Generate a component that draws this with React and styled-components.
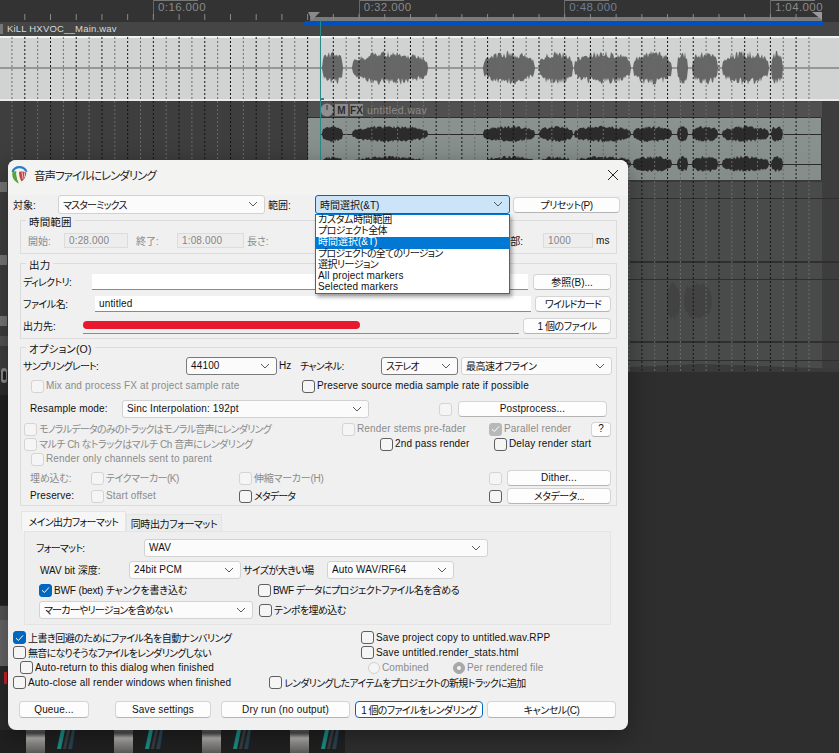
import React from "react";
import styled, { createGlobalStyle, css } from "styled-components";

const GlobalStyle = createGlobalStyle`
  * { box-sizing: border-box; }
  html, body { margin: 0; padding: 0; background: #2e2e2e; }
  body {
    font-family: "Liberation Sans", "Noto Sans CJK JP", sans-serif;
    font-size: 10px;
    font-feature-settings: "palt";
    letter-spacing: 0.15px;
  }
`;

// kana in the dialog font is narrower than in Noto, so close it up by how much kana a string has
const KANA = /[\u3040-\u30ff]/g;
function tracking(text) {
  if (typeof text !== "string" || !text.length) return 0.15;
  const kana = (text.match(KANA) || []).length;
  if (!kana) return /[\u4e00-\u9fff]/.test(text) ? 0 : 0.15;
  return 0.25 - (1.1 * kana) / text.length;
}
const Tracked = styled.span`
  letter-spacing: ${(p) => p.$ls}px;
`;
function T({ children }) {
  return <Tracked $ls={tracking(children)}>{children}</Tracked>;
}

// daw behind the dialog
const Stage = styled.div`
  position: relative;
  width: 839px;
  height: 753px;
  overflow: hidden;
  display: flex;
  flex-direction: column;
  background: #2e2e2e;
`;
const Ruler = styled.div`
  flex: 0 0 22px;
  display: flex;
  padding-left: 153px;
  background: #333;
`;
const RulerMark = styled.div`
  flex: 0 0 205.67px;
  height: 17px;
  padding: 1px 0 0 4px;
  border-left: 1px solid #666;
  font-size: 11.5px;
  letter-spacing: 0.4px;
  color: ${(p) => p.$color};
  background: linear-gradient(#777, #777) 0 0 / 44px 1px no-repeat;
`;
const ItemTitle = styled.div`
  flex: 0 0 14px;
  padding: 1px 0 0 7px;
  background: #454545;
  color: #d8d8d8;
  font-size: 9.5px;
  letter-spacing: 0.2px;
`;
const LightItem = styled.div`
  flex: 0 0 65px;
  background: #d0d3d1;
  border-top: 2px solid #f2f2f2;
  border-bottom: 2px solid #eaeaea;
`;
const TrackArea = styled.div`
  flex: 0 0 271px;
  background: linear-gradient(90deg, #3e3e3e 308px, #494a4a 308px, #494a4a 822px, #3d3d3d 822px);
`;
const Floor = styled.div`
  flex: 1;
  background: #2e2e2e;
`;
const Mixer = styled.div`
  flex: 0 0 23px;
  width: 345px;
  display: flex;
  padding-left: 26px;
  background: #202020;
`;
const Strip = styled.div`
  flex: 0 0 88px;
  display: flex;
  gap: 11px;
`;
const Fader = styled.div`
  width: 19px;
  background: linear-gradient(#5a5a5a 0, #4a4a4a 3px, #b5b3b0 8px, #8a8886 14px, #5a5a5a 23px);
`;
const Drawing = styled.svg`
  position: absolute;
  left: 0;
  top: 0;
`;
const TakeName = styled.span`
  position: absolute;
  left: 367px;
  top: 104px;
  color: #8c8c8c;
  font-size: 10.5px;
  letter-spacing: 0.4px;
`;
const TakeBadge = styled.span`
  position: absolute;
  left: ${(p) => p.$x}px;
  top: 104px;
  width: 13px;
  height: 12px;
  display: flex;
  align-items: center;
  justify-content: center;
  background: #8a8a8a;
  color: #2a2a2a;
  font-size: 10px;
  font-weight: bold;
  letter-spacing: 0;
`;

// dialog window
const Dialog = styled.div`
  position: absolute;
  left: 8px;
  top: 160px;
  width: 620px;
  height: 570px;
  display: flex;
  flex-direction: column;
  border-radius: 8px;
  background: #f0f0f0;
  color: #111;
  box-shadow: 0 6px 24px rgba(0, 0, 0, 0.35);
`;
const TitleBar = styled.div`
  flex: 0 0 35px;
  display: flex;
  align-items: center;
  padding: 0 9px 6px 3px;
  border-radius: 8px 8px 0 0;
  background: #f3f3f2;
  font-size: 11.5px;
  color: #222;
`;
const Title = styled.span`
  flex: 1;
  margin-left: 6px;
  letter-spacing: -1px;
`;
const Row = styled.div`
  flex: 0 0 ${(p) => p.$h}px;
  height: ${(p) => p.$h}px;
  display: flex;
  align-items: center;
  margin-top: ${(p) => p.$mt || 0}px;
  padding-left: ${(p) => p.$pl || 0}px;
`;
const LabelText = styled.span`
  flex: 0 0 ${(p) => (p.$w ? `${p.$w}px` : "auto")};
  margin-left: ${(p) => p.$ml || 0}px;
  padding-bottom: 1px;
  white-space: nowrap;
  text-align: ${(p) => (p.$right ? "right" : "left")};
  color: ${(p) => (p.$dim ? "#8b8b8b" : "#111")};
`;
function Label({ children, ...rest }) {
  return (
    <LabelText {...rest}>
      <T>{children}</T>
    </LabelText>
  );
}
const Box = styled.div`
  flex: 0 0 ${(p) => p.$w}px;
  width: ${(p) => p.$w}px;
  height: ${(p) => p.$h || 18}px;
  margin-left: ${(p) => p.$ml || 0}px;
  display: flex;
  align-items: center;
  justify-content: space-between;
  padding: 0 6px 1px 4px;
  border-radius: 3px;
  white-space: nowrap;
  ${(p) =>
    p.$focus
      ? css`
          background: #cce4f7;
          border: 1px solid #0067c0;
        `
      : css`
          background: #fbfbfb;
          border: 1px solid ${p.$strong ? "#7a7a7a" : "#d2d2d2"};
        `}
`;
const ButtonBox = styled.div`
  flex: 0 0 ${(p) => p.$w}px;
  width: ${(p) => p.$w}px;
  height: ${(p) => p.$h || 16}px;
  margin-left: ${(p) => p.$ml || 0}px;
  display: flex;
  align-items: center;
  justify-content: center;
  padding-bottom: 1px;
  border-radius: 4px;
  background: #fdfdfd;
  white-space: nowrap;
  border: 1px solid ${(p) => (p.$primary ? "#0067c0" : "#d4d4d4")};
  border-bottom-color: ${(p) => (p.$primary ? "#0067c0" : "#b4b4b4")};
`;
function Button({ children, ...rest }) {
  return (
    <ButtonBox {...rest}>
      <T>{children}</T>
    </ButtonBox>
  );
}
const Field = styled.div`
  flex: 0 0 ${(p) => p.$w}px;
  position: relative;
  height: ${(p) => p.$h || 16}px;
  margin-left: ${(p) => p.$ml || 0}px;
  padding: 0 0 1px 4px;
  display: flex;
  align-items: center;
  background: ${(p) => (p.$readonly ? "#efefef" : "#fff")};
  border-bottom: 1px solid #8a8a8a;
`;
const StaticField = styled.div`
  flex: 0 0 ${(p) => p.$w}px;
  height: 15px;
  margin-left: ${(p) => p.$ml || 0}px;
  padding: 0 0 1px 4px;
  display: flex;
  align-items: center;
  color: #858585;
  background: #ededed;
  border: 1px solid #dcdcdc;
`;
const Scribble = styled.div`
  position: absolute;
  left: 0;
  top: 3px;
  width: 277px;
  height: 8px;
  border-radius: 4px;
  background: #e8192f;
`;
const Group = styled.div`
  position: relative;
  flex: 0 0 ${(p) => p.$h}px;
  width: 597px;
  margin: ${(p) => p.$mt}px 0 0 12px;
  padding-top: ${(p) => p.$pt}px;
  border: 1px solid #dcdcdc;
  display: flex;
  flex-direction: column;
`;
const Legend = styled.span`
  position: absolute;
  left: 5px;
  top: -7px;
  padding: 0 3px;
  background: #f0f0f0;
  font-size: 10.5px;
`;
const Tabs = styled.div`
  flex: 0 0 20px;
  display: flex;
  align-items: flex-end;
  margin: 5px 0 0 13px;
`;
const TabBox = styled.div`
  flex: 0 0 ${(p) => p.$w}px;
  height: ${(p) => (p.$active ? 20 : 17)}px;
  display: flex;
  align-items: center;
  justify-content: center;
  background: ${(p) => (p.$active ? "#f6f6f6" : "#ececec")};
  border: 1px solid #e4e4e4;
  border-bottom: none;
`;
function Tab({ children, ...rest }) {
  return (
    <TabBox {...rest}>
      <T>{children}</T>
    </TabBox>
  );
}
const Panel = styled.div`
  flex: 0 0 94px;
  width: 587px;
  margin-left: 16px;
  padding-top: 7px;
  display: flex;
  flex-direction: column;
  background: #eeeeee;
  border: 1px solid #e4e4e4;
`;
const DropList = styled.div`
  position: absolute;
  left: 307px;
  top: 54px;
  width: 195px;
  height: 80px;
  background: #fff;
  border: 1px solid #0078d4;
  box-shadow: 2px 3px 4px rgba(0, 0, 0, 0.35);
`;
const DropRow = styled.div`
  height: 11.2px;
  line-height: 10px;
  padding-left: 2px;
  white-space: nowrap;
  background: ${(p) => (p.$on ? "#0078d4" : "transparent")};
  color: ${(p) => (p.$on ? "#fff" : "#111")};
`;
function DropItem({ children, ...rest }) {
  return (
    <DropRow {...rest}>
      <T>{children}</T>
    </DropRow>
  );
}
const OptWrap = styled.div`
  flex: 0 0 ${(p) => (p.$w ? `${p.$w}px` : "auto")};
  margin-left: ${(p) => p.$ml || 0}px;
  display: flex;
  align-items: center;
  gap: 2px;
  white-space: nowrap;
`;
const CheckBox = styled.div`
  flex: 0 0 13px;
  height: 13px;
  display: flex;
  align-items: center;
  justify-content: center;
  border-radius: 3px;
  ${(p) =>
    p.$on
      ? css`
          background: ${p.$dim ? "#b8b8b8" : "#0067c0"};
          border: 1px solid ${p.$dim ? "#b8b8b8" : "#0067c0"};
        `
      : css`
          background: #f5f5f5;
          border: 1px solid ${p.$dim ? "#d4d4d4" : "#5f5f5f"};
        `}
`;
const RadioDot = styled.div`
  flex: 0 0 12px;
  height: 12px;
  display: flex;
  align-items: center;
  justify-content: center;
  border-radius: 50%;
  background: ${(p) => (p.$on ? "#a8a8a8" : "#f5f5f5")};
  border: 1px solid ${(p) => (p.$on ? "#a8a8a8" : "#d0d0d0")};
  &::after {
    content: "";
    width: 4px;
    height: 4px;
    border-radius: 50%;
    background: ${(p) => (p.$on ? "#f5f5f5" : "transparent")};
  }
`;

function Chevron() {
  return (
    <svg width="10" height="6" viewBox="0 0 10 6" fill="none">
      <path d="M1 1 L5 5 L9 1" stroke="#5a5a5a" strokeWidth="1" />
    </svg>
  );
}

function Combo({ text, ...rest }) {
  return (
    <Box {...rest}>
      <T>{text}</T>
      <Chevron />
    </Box>
  );
}

function Check({ on, dim }) {
  return (
    <CheckBox $on={on} $dim={dim}>
      {on && (
        <svg width="9" height="8" viewBox="0 0 9 8" fill="none">
          <path d="M1 4.2 L3.4 6.5 L8 1.4" stroke="#fff" strokeWidth="1" />
        </svg>
      )}
    </CheckBox>
  );
}

function Opt({ w, ml, on, dim, text }) {
  return (
    <OptWrap $w={w} $ml={ml}>
      <Check on={on} dim={dim} />
      {text && <Label $dim={dim}>{text}</Label>}
    </OptWrap>
  );
}

function ReaperIcon() {
  return (
    <svg width="17" height="18" viewBox="0 0 17 18" fill="none">
      <path d="M1.5 6 A7.5 7.5 0 0 1 15.5 6" stroke="#2a7fc0" strokeWidth="2.2" />
      <path d="M1.5 6 C0.5 11 3 15.5 8 17.5 C6 13 5 9 5.5 5 Z" fill="#58a33c" />
      <path d="M5.5 5 C5 9 6 13 8 17.5 C12 16.5 15.8 12 15.6 6 C12 4 8 4 5.5 5 Z" fill="#f2f2f2" />
      <path d="M8 6 C8 10 9 13 10.5 15.5 C13 14 15 11 15.3 6.6 C13 5.4 10 5.4 8 6 Z" fill="#c8433f" />
      <path d="M11 6 L12 13 M13.5 6.5 L13.5 11" stroke="#f2f2f2" strokeWidth="0.7" />
    </svg>
  );
}

// seeded so the wave form stays the same on every run
let seed = 11;
const rnd = () => {
  seed = (seed * 16807) % 2147483647;
  return (seed % 1000) / 1000;
};

const SEGMENTS = [
  [322, 343], [352, 428], [483, 535], [539, 573], [574, 631], [633, 672],
  [677, 688], [692, 718], [722, 769], [771, 783],
];

function wavePath(cy, amp, segments, floor) {
  return segments
    .map(([a, b]) => {
      const top = [];
      const bottom = [];
      for (let x = a; x <= b; x += 1) {
        const t = (x - a) / (b - a);
        const env = Math.pow(Math.sin(Math.PI * t), 0.3) * amp;
        top.push(`${x} ${(cy - env * (floor + (1 - floor) * rnd()) - 0.5).toFixed(1)}`);
        bottom.unshift(`${x} ${(cy + env * (floor + (1 - floor) * rnd()) + 0.5).toFixed(1)}`);
      }
      return `M${top.join(" L")} L${bottom.join(" L")} Z`;
    })
    .join(" ");
}

const WAVE_MAIN = wavePath(68, 17, SEGMENTS, 0.55);
const WAVE_L = wavePath(134, 8, SEGMENTS, 0.6);
const WAVE_R = wavePath(164, 8, SEGMENTS, 0.6);
const WAVE_GHOST = wavePath(301, 19, [[667, 680], [684, 712]], 0.7);

const GRID = Array.from({ length: 63 }, (_, i) => 11.95 + i * 12.855);

function Background() {
  return (
    <Drawing width="839" height="753" viewBox="0 0 839 753">
      <rect x="310" y="17" width="512" height="9" fill="#7a7a7a" />
      <path d="M308 12 L320 12 L312 20 Z" fill="#8a8a8a" />
      <path d="M812 12 L822 12 L822 20 Z" fill="#9a9a9a" />
      {GRID.map((x, i) =>
        i % 2 === 1 ? <line key={i} x1={x} x2={x} y1="14" y2="20" stroke="#8a8a8a" /> : null
      )}

      <line x1="0" x2="839" y1="68" y2="68" stroke="#5a5a5a" />
      <path d={WAVE_MAIN} fill="#666" />

      <rect x="308" y="102" width="514" height="15" fill="#505050" />
      <defs>
        <linearGradient id="take" x1="0" y1="0" x2="0" y2="1">
          <stop offset="0" stopColor="#8b9391" />
          <stop offset="1" stopColor="#858d8b" />
        </linearGradient>
      </defs>
      <rect x="308" y="117" width="514" height="64" fill="url(#take)" />
      <path d="M308 117.5 H821.5 V181" stroke="#2e2e2e" fill="none" />
      <rect x="308" y="180" width="514" height="2" fill="#3a3a3a" />
      <line x1="321" x2="822" y1="134.5" y2="134.5" stroke="#2a2a2a" />
      <line x1="321" x2="822" y1="164.5" y2="164.5" stroke="#2a2a2a" />
      <path d={WAVE_L} fill="#2b2b2b" />
      <path d={WAVE_R} fill="#2b2b2b" />

      <circle cx="327" cy="110" r="6.5" fill="#8f8f8f" />
      <line x1="327" x2="327" y1="105" y2="110" stroke="#333" />

      <line x1="308" x2="839" y1="198.5" y2="198.5" stroke="#2f2f2f" />
      <rect x="308" y="261" width="531" height="2" fill="#2f2f2f" />
      <line x1="308" x2="839" y1="279.5" y2="279.5" stroke="#2f2f2f" />
      <rect x="308" y="341" width="531" height="2" fill="#2f2f2f" />
      <line x1="308" x2="839" y1="360.5" y2="360.5" stroke="#2f2f2f" />
      <path d={WAVE_GHOST} fill="#424242" />
      <path d="M630 372 L630 367 L700 364 L760 366 L839 369 L839 372 Z" fill="#3a3a3a" />

      {GRID.map((x, i) => (
        <line
          key={i}
          x1={x}
          x2={x}
          y1="37"
          y2="372"
          stroke={i % 2 === 1 ? "#161616" : "#6b6b6b"}
          strokeDasharray="2 2"
        />
      ))}

      <rect x="304" y="21" width="520" height="5" rx="2.5" fill="#0050c0" />
      <line x1="320.5" x2="320.5" y1="20" y2="160" stroke="#2a8a8a" />
      <rect x="320" y="98" width="4" height="2" fill="#2a8a8a" />

      <rect x="0" y="24" width="3" height="10" fill="#777" />
      <rect x="0" y="182" width="7" height="10" fill="#777" />
      <rect x="0" y="255" width="7" height="10" fill="#777" />
      <rect x="0" y="316" width="7" height="10" fill="#777" />
      <rect x="0" y="336" width="8" height="10" fill="#555" />
      <rect x="1" y="368" width="6" height="15" rx="3" fill="#8a8a8a" />
      <rect x="3" y="371" width="3" height="9" rx="1.5" fill="#222" />
      <rect x="0" y="395" width="8" height="210" fill="#222" />
      <rect x="0" y="606" width="8" height="14" fill="#555" />
      <rect x="0" y="620" width="8" height="46" fill="#666" />
      <rect x="0" y="666" width="8" height="64" fill="#2a2a2a" />
      <rect x="4" y="672" width="3" height="12" fill="#c8202c" />
    </Drawing>
  );
}

function Knob() {
  return (
    <svg width="20" height="19" viewBox="0 0 20 19">
      <rect width="20" height="19" rx="2" fill="#1c2226" />
      <path d="M1 19 L5 0 L9 0 L5 19 Z" fill="#1f8a80" />
      <path d="M7 19 L11 0 L14 0 L10 19 Z" fill="#3c3c3c" />
      <path d="M12 19 L16 0 L19 0 L16 19 Z" fill="#2c4150" />
    </svg>
  );
}

export default function App() {
  return (
    <Stage>
      <GlobalStyle />
      <Ruler>
        <RulerMark $color="#8a8a8a">0:16.000</RulerMark>
        <RulerMark $color="#8a8a8a">0:32.000</RulerMark>
        <RulerMark $color="#6f7f95">0:48.000</RulerMark>
        <RulerMark $color="#8a8a8a">1:04.000</RulerMark>
      </Ruler>
      <ItemTitle>KiLL HXVOC__Main.wav</ItemTitle>
      <LightItem />
      <TrackArea />
      <Floor />
      <Mixer>
        {[0, 1, 2, 3].map((i) => (
          <Strip key={i}>
            <Fader />
            <Knob />
          </Strip>
        ))}
      </Mixer>
      <Background />
      <TakeBadge $x={335}>M</TakeBadge>
      <TakeBadge $x={350}>FX</TakeBadge>
      <TakeName>untitled.wav</TakeName>

      <Dialog>
        <TitleBar>
          <ReaperIcon />
          <Title>音声ファイルにレンダリング</Title>
          <svg width="12" height="12" viewBox="0 0 12 12">
            <path d="M1 1 L11 11 M11 1 L1 11" stroke="#222" strokeWidth="1" />
          </svg>
        </TitleBar>

        <Row $h={19} $pl={5}>
          <Label $w={45}>対象:</Label>
          <Combo $w={207} $h={19} text="マスターミックス" />
          <Label $w={47} $ml={3}>範囲:</Label>
          <Combo $w={195} $h={19} $focus text="時間選択(&T)" />
          <Button $w={107} $ml={3} $h={16}>プリセット(P)</Button>
        </Row>

        <Group $h={34} $mt={6} $pt={12}>
          <Legend>時間範囲</Legend>
          <Row $h={15} $pl={7}>
            <Label $w={36} $dim>開始:</Label>
            <StaticField $w={64}>0:28.000</StaticField>
            <Label $w={41} $ml={8} $dim>終了:</Label>
            <StaticField $w={67}>1:08.000</StaticField>
            <Label $w={200} $ml={3} $dim>長さ:</Label>
            <Label $w={76} $right>末尾部:</Label>
            <StaticField $w={50} $ml={20}>1000</StaticField>
            <Label $ml={3}>ms</Label>
          </Row>
        </Group>

        <Group $h={76} $mt={9} $pt={10}>
          <Legend>出力</Legend>
          <Row $h={16} $pl={2}>
            <Label $w={69}>ディレクトリ:</Label>
            <Field $w={436} />
            <Button $w={78} $ml={5}>参照(B)...</Button>
          </Row>
          <Row $h={16} $mt={6} $pl={2}>
            <Label $w={72}>ファイル名:</Label>
            <Field $w={436}>untitled</Field>
            <Button $w={76} $ml={4}>ワイルドカード</Button>
          </Row>
          <Row $h={16} $mt={6} $pl={2}>
            <Label $w={60}>出力先:</Label>
            <Field $w={436} $readonly>
              <Scribble />
            </Field>
            <Button $w={88} $ml={4}>1 個のファイル</Button>
          </Row>
        </Group>

        <Group $h={159} $mt={8} $pt={9}>
          <Legend>オプション(O)</Legend>
          <Row $h={18} $pl={2}>
            <Label $w={163}>サンプリングレート:</Label>
            <Combo $w={91} $strong text="44100" />
            <Label $w={21} $ml={2}>Hz</Label>
            <Label $w={81}>チャンネル:</Label>
            <Combo $w={77} $strong text="ステレオ" />
            <Combo $w={151} $ml={3} text="最高速オフライン" />
          </Row>
          <Row $h={14} $mt={4} $pl={10}>
            <Opt w={271} dim text="Mix and process FX at project sample rate" />
            <Opt text="Preserve source media sample rate if possible" />
          </Row>
          <Row $h={18} $mt={7} $pl={9}>
            <Label $w={92}>Resample mode:</Label>
            <Combo $w={247} text="Sinc Interpolation: 192pt" />
            <Opt w={19} ml={70} dim />
            <Button $w={149}>Postprocess...</Button>
          </Row>
          <Row $h={14} $mt={4} $pl={3}>
            <Opt w={318} dim text="モノラルデータのみのトラックはモノラル音声にレンダリング" />
            <Opt w={147} dim text="Render stems pre-fader" />
            <Opt w={102} dim on text="Parallel render" />
            <Button $w={20} $h={15}>?</Button>
          </Row>
          <Row $h={14} $mt={1} $pl={3}>
            <Opt w={356} dim text="マルチ Ch なトラックはマルチ Ch 音声にレンダリング" />
            <Opt w={114} text="2nd pass render" />
            <Opt text="Delay render start" />
          </Row>
          <Row $h={14} $mt={1} $pl={10}>
            <Opt dim text="Render only channels sent to parent" />
          </Row>
          <Row $h={16} $mt={4} $pl={9}>
            <Label $w={61} $dim>埋め込む:</Label>
            <Opt w={148} dim text="テイクマーカー(K)" />
            <Opt w={250} dim text="伸縮マーカー(H)" />
            <Opt w={18} dim />
            <Button $w={104}>Dither...</Button>
          </Row>
          <Row $h={16} $mt={2} $pl={9}>
            <Label $w={61}>Preserve:</Label>
            <Opt w={148} dim text="Start offset" />
            <Opt w={250} text="メタデータ" />
            <Opt w={18} />
            <Button $w={104}>メタデータ...</Button>
          </Row>
        </Group>

        <Tabs>
          <Tab $w={105} $active>メイン出力フォーマット</Tab>
          <Tab $w={96}>同時出力フォーマット</Tab>
        </Tabs>
        <Panel>
          <Row $h={18} $pl={11}>
            <Label $w={108}>フォーマット:</Label>
            <Combo $w={344} text="WAV" />
          </Row>
          <Row $h={18} $mt={4} $pl={15}>
            <Label $w={89}>WAV bit 深度:</Label>
            <Combo $w={112} text="24bit PCM" />
            <Label $w={84} $ml={2}>サイズが大きい場</Label>
            <Combo $w={127} text="Auto WAV/RF64" />
          </Row>
          <Row $h={14} $mt={4} $pl={14}>
            <Opt w={219} on text="BWF (bext) チャンクを書き込む" />
            <Opt text="BWF データにプロジェクトファイル名を含める" />
          </Row>
          <Row $h={18} $mt={4} $pl={14}>
            <Combo $w={214} text="マーカーやリージョンを含めない" />
            <Opt ml={6} text="テンポを埋め込む" />
          </Row>
        </Panel>

        <Row $h={15} $mt={5} $pl={5}>
          <Opt w={348} on text="上書き回避のためにファイル名を自動ナンバリング" />
          <Opt text="Save project copy to untitled.wav.RPP" />
        </Row>
        <Row $h={15} $pl={5}>
          <Opt w={348} text="無音になりそうなファイルをレンダリングしない" />
          <Opt text="Save untitled.render_stats.html" />
        </Row>
        <Row $h={15} $pl={12}>
          <Opt w={348} text="Auto-return to this dialog when finished" />
          <OptWrap $w={85}>
            <RadioDot />
            <Label $dim>Combined</Label>
          </OptWrap>
          <OptWrap>
            <RadioDot $on />
            <Label $dim>Per rendered file</Label>
          </OptWrap>
        </Row>
        <Row $h={15} $pl={5}>
          <Opt w={256} text="Auto-close all render windows when finished" />
          <Opt text="レンダリングしたアイテムをプロジェクトの新規トラックに追加" />
        </Row>

        <Row $h={17} $mt={11} $pl={11}>
          <Button $w={70} $h={17}>Queue...</Button>
          <Button $w={96} $h={17} $ml={26}>Save settings</Button>
          <Button $w={129} $h={17} $ml={10}>Dry run (no output)</Button>
          <Button $w={128} $h={17} $ml={5} $primary>1 個のファイルをレンダリング</Button>
          <Button $w={129} $h={17} $ml={4}>キャンセル(C)</Button>
        </Row>

        <DropList>
          <DropItem>カスタム時間範囲</DropItem>
          <DropItem>プロジェクト全体</DropItem>
          <DropItem $on>時間選択(&T)</DropItem>
          <DropItem>プロジェクトの全てのリージョン</DropItem>
          <DropItem>選択リージョン</DropItem>
          <DropItem>All project markers</DropItem>
          <DropItem>Selected markers</DropItem>
        </DropList>
      </Dialog>
    </Stage>
  );
}
